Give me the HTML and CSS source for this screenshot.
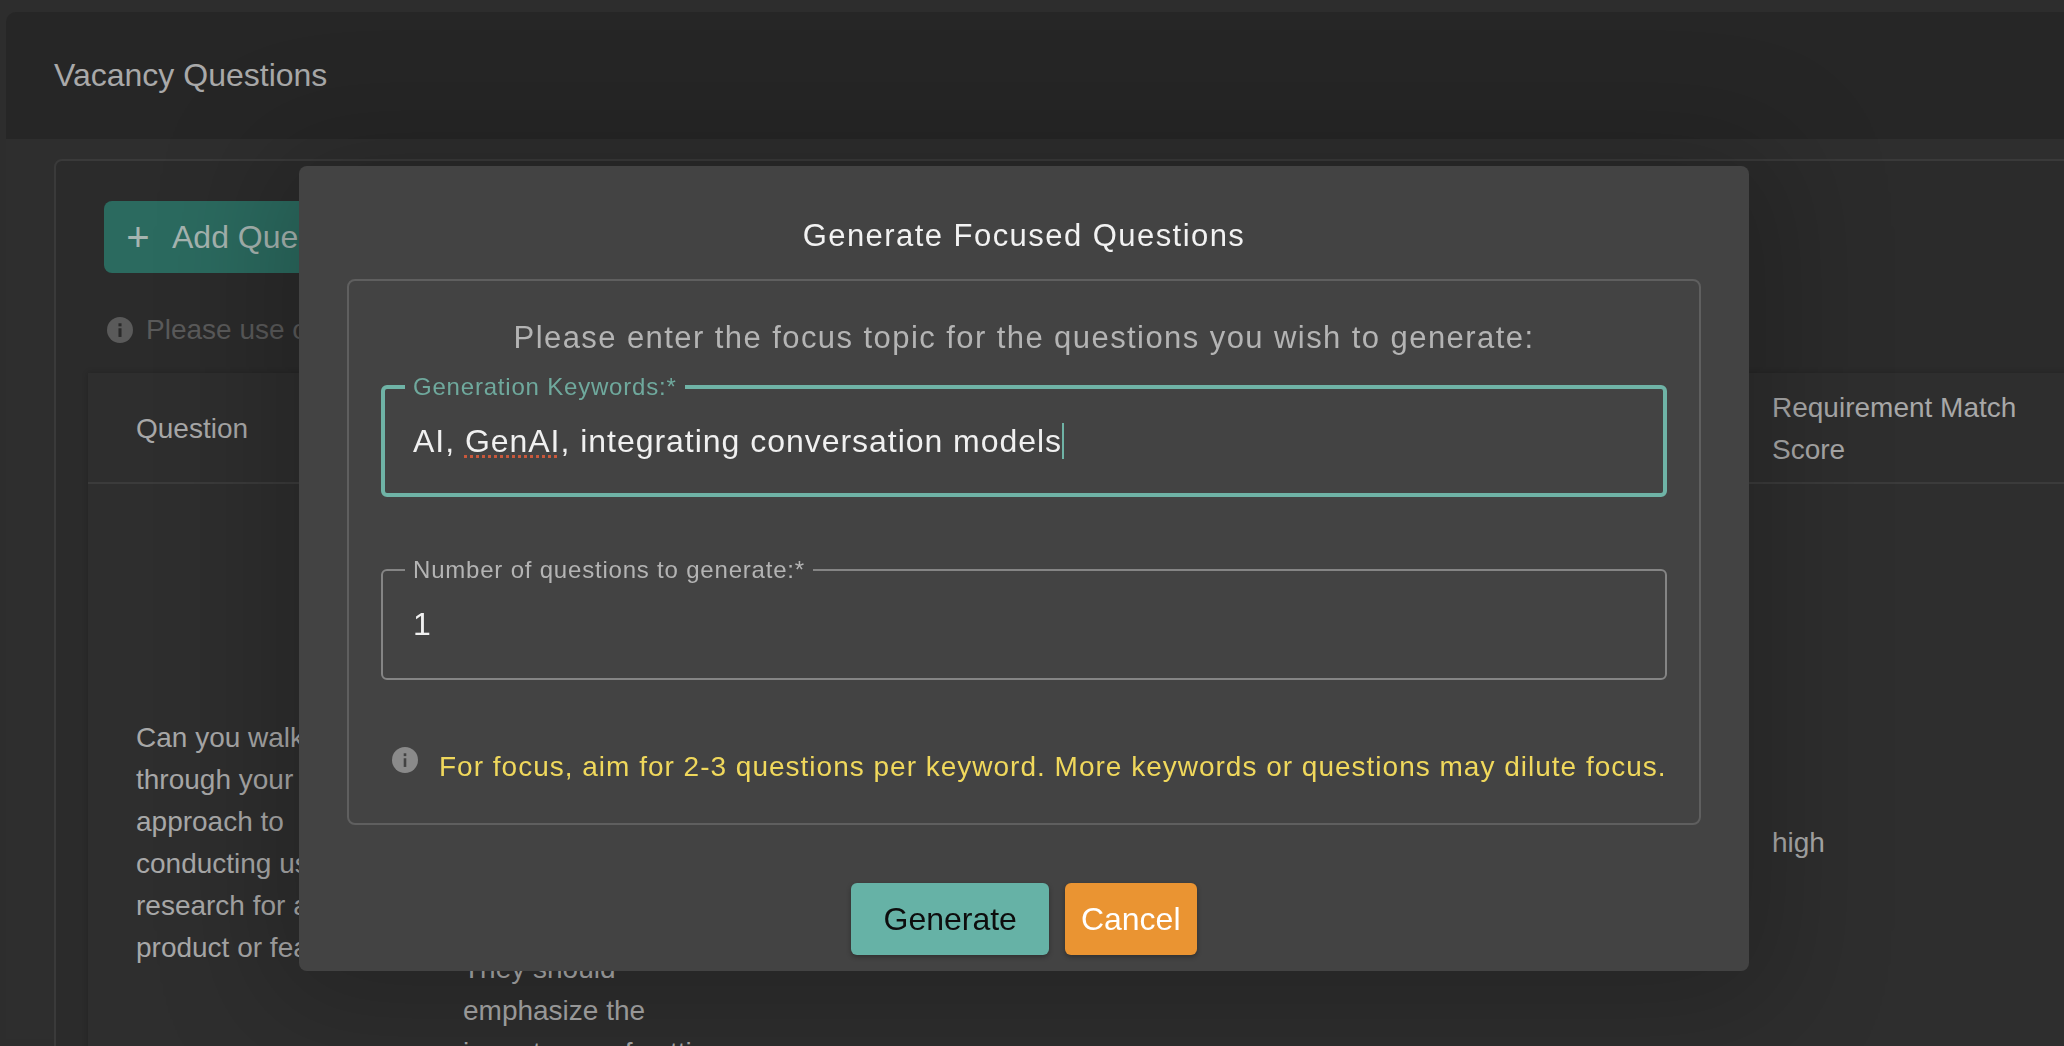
FILE: index.html

```html
<!DOCTYPE html>
<html lang="en">
<head>
  <meta charset="UTF-8" />
  <meta name="viewport" content="width=device-width, initial-scale=1.0"/>
  <title>Vacancy Questions</title>
  <link rel="stylesheet" href="styles.css">
</head>
<body>
  <div class="page">
    <header class="page-header">Vacancy Questions</header>

    <div class="page-body">
      <section class="card">
        <button class="add-btn"><span class="add-plus">+</span>Add Question</button>

        <p class="hint">
          <svg class="info-icon" viewBox="0 0 24 24"><circle cx="12" cy="12" r="12" fill="#5a5a5a"/><rect x="10.6" y="10.4" width="2.8" height="8" fill="#2a2a2a"/><rect x="10.6" y="5.8" width="2.8" height="2.8" fill="#2a2a2a"/></svg>
          Please use one of the options above to add questions to this vacancy.
        </p>

        <div class="table">
          <div class="table-head">
            <div class="cell">Question</div>
            <div class="cell">Expected Answer</div>
            <div class="cell cell-wide"></div>
            <div class="cell">Requirement Match<br>Score</div>
          </div>
          <div class="table-row">
            <div class="cell">Can you walk<br>through your<br>approach to<br>conducting user<br>research for a<br>product or feature?</div>
            <div class="cell">
              The candidate<br>should describe<br>their process<br>for planning<br>and running<br>user research,<br>including the<br>methods they<br>choose and<br>how findings<br>inform design.<br>They should<br>emphasize the<br>importance of setting<br>clear goals and<br>sharing results<br>with the team.
            </div>
            <div class="cell cell-wide"></div>
            <div class="cell">high</div>
          </div>
        </div>
      </section>
    </div>
  </div>

  <div class="modal">
    <h2 class="modal-title">Generate Focused Questions</h2>

    <div class="modal-box">
      <p class="modal-prompt">Please enter the focus topic for the questions you wish to generate:</p>

      <fieldset class="field field-focus">
        <legend>Generation Keywords:*</legend>
        <div class="field-value">AI, <span class="misspelled">GenAI</span>, integrating conversation models<span class="caret"></span></div>
      </fieldset>

      <fieldset class="field">
        <legend>Number of questions to generate:*</legend>
        <div class="field-value">1</div>
      </fieldset>

      <div class="modal-note">
        <svg class="info-icon" viewBox="0 0 24 24"><circle cx="12" cy="12" r="12" fill="#8a8a8a"/><rect x="10.8" y="10.4" width="2.4" height="8" fill="#434343"/><rect x="10.8" y="5.8" width="2.4" height="2.6" fill="#434343"/></svg>
        <span>For focus, aim for 2-3 questions per keyword. More keywords or questions may dilute focus.</span>
      </div>
    </div>

    <div class="modal-actions">
      <button class="btn btn-generate">Generate</button>
      <button class="btn btn-cancel">Cancel</button>
    </div>
  </div>
</body>
</html>
```

FILE: styles.css

```css
* {
  box-sizing: border-box;
}
body, html {
  margin: 0;
  padding: 0;
  height: 100%;
  overflow: hidden;
  font-family: "Liberation Sans", Arial, sans-serif;
  background: #2d2d2d;
  color: #a8a8a8;
}
.page {
  height: 100%;
  padding: 12px 0 0 6px;
  overflow: hidden;
}
.page-header {
  height: 127px;
  padding-left: 48px;
  display: flex;
  align-items: center;
  font-size: 32px;
  color: #a9a9a9;
  background: #262626;
  border-top-left-radius: 10px;
}
.page-body {
  height: 900px;
  padding: 20px 0 0 48px;
  background: #2e2e2e;
}
.card {
  height: 1000px;
  margin-right: -20px;
  padding: 40px 0 0 48px;
  background: #2b2b2b;
  border: 2px solid #3a3a3a;
  border-radius: 8px;
}
.add-btn {
  display: flex;
  align-items: center;
  width: 330px;
  height: 72px;
  padding: 0 0 0 20px;
  font: inherit;
  font-size: 32px;
  color: #a6b4b0;
  background: #2b6a5f;
  border: none;
  border-radius: 8px;
}
.add-plus {
  width: 48px;
  font-size: 40px;
  font-weight: normal;
  line-height: 1;
  margin-left: -10px;
  margin-right: 10px;
}
.hint {
  display: flex;
  align-items: center;
  gap: 13px;
  margin: 40px 0 0 3px;
  font-size: 28px;
  line-height: 34px;
  color: #5a5a5a;
}
.info-icon {
  flex: none;
  width: 26px;
  height: 26px;
}
.table {
  margin: 26px 0 0 -16px;
  background: #2e2e2e;
  box-shadow: 0 0 6px rgba(0, 0, 0, 0.2);
}
.table-head, .table-row {
  display: grid;
  grid-template-columns: 327px 327px 982px 1fr;
  align-items: center;
  font-size: 28px;
  line-height: 42px;
}
.table-head {
  height: 111px;
  padding-top: 2px;
  border-bottom: 2px solid #3b3b3b;
}
.table-row {
  height: 718px;
}
.cell {
  padding-left: 48px;
  white-space: nowrap;
}
.modal {
  position: fixed;
  top: 166px;
  left: 299px;
  width: 1450px;
  height: 805px;
  padding: 50px 48px 16px;
  display: flex;
  flex-direction: column;
  background: #434343;
  border-radius: 8px;
  box-shadow: 0 10px 120px 30px rgba(0, 0, 0, 0.2);
}
.modal-title {
  margin: 0 0 23px;
  font-size: 31px;
  font-weight: normal;
  line-height: 40px;
  letter-spacing: 1.45px;
  text-align: center;
  color: #f2f2f2;
}
.modal-box {
  height: 546px;
  padding: 37px 32px 0;
  border: 2px solid #5f5f5f;
  border-radius: 8px;
}
.modal-prompt {
  margin: 0;
  font-size: 31px;
  line-height: 40px;
  letter-spacing: 1.43px;
  text-align: center;
  color: #b4b4b4;
}
.field {
  height: 122px;
  margin: 0 0 60px;
  padding: 0 30px;
  border: 2px solid #858585;
  border-radius: 6px;
}
.field legend {
  padding: 0 8px;
  margin-left: -8px;
  font-size: 24px;
  line-height: 24px;
  letter-spacing: 0.8px;
  color: #b4b4b4;
}
.field-focus {
  margin-top: 17px;
  margin-bottom: 61px;
  border: 4px solid #6fb3a6;
  padding: 0 28px;
}
.field-focus legend {
  color: #6fa99d;
}
.field-value {
  display: flex;
  align-items: center;
  height: 84px;
  font-size: 32px;
  letter-spacing: 0.97px;
  color: #f0f0f0;
  white-space: pre;
}
.misspelled {
  text-decoration: underline dotted #c8583c 3px;
  text-underline-offset: 3px;
}
.caret {
  width: 2px;
  height: 36px;
  background: #6fb3a6;
}
.modal-note {
  display: flex;
  align-items: flex-start;
  gap: 21px;
  margin-left: 11px;
  padding-top: 8px;
  font-size: 28px;
  line-height: 38px;
  letter-spacing: 1px;
  color: #f0d85c;
  white-space: nowrap;
}
.modal-note .info-icon {
  margin-top: -1px;
}
.modal-actions {
  display: flex;
  justify-content: center;
  gap: 16px;
  margin-top: 58px;
}
.btn {
  height: 72px;
  padding: 0 32px;
  font: inherit;
  font-size: 32px;
  border: none;
  border-radius: 6px;
  box-shadow: 0 2px 5px rgba(0, 0, 0, 0.3);
}
.btn-generate {
  color: #0d0d0d;
  background: #66b2a6;
}
.btn-cancel {
  padding: 0 16px;
  color: #fff;
  background: #ea9432;
}
```
